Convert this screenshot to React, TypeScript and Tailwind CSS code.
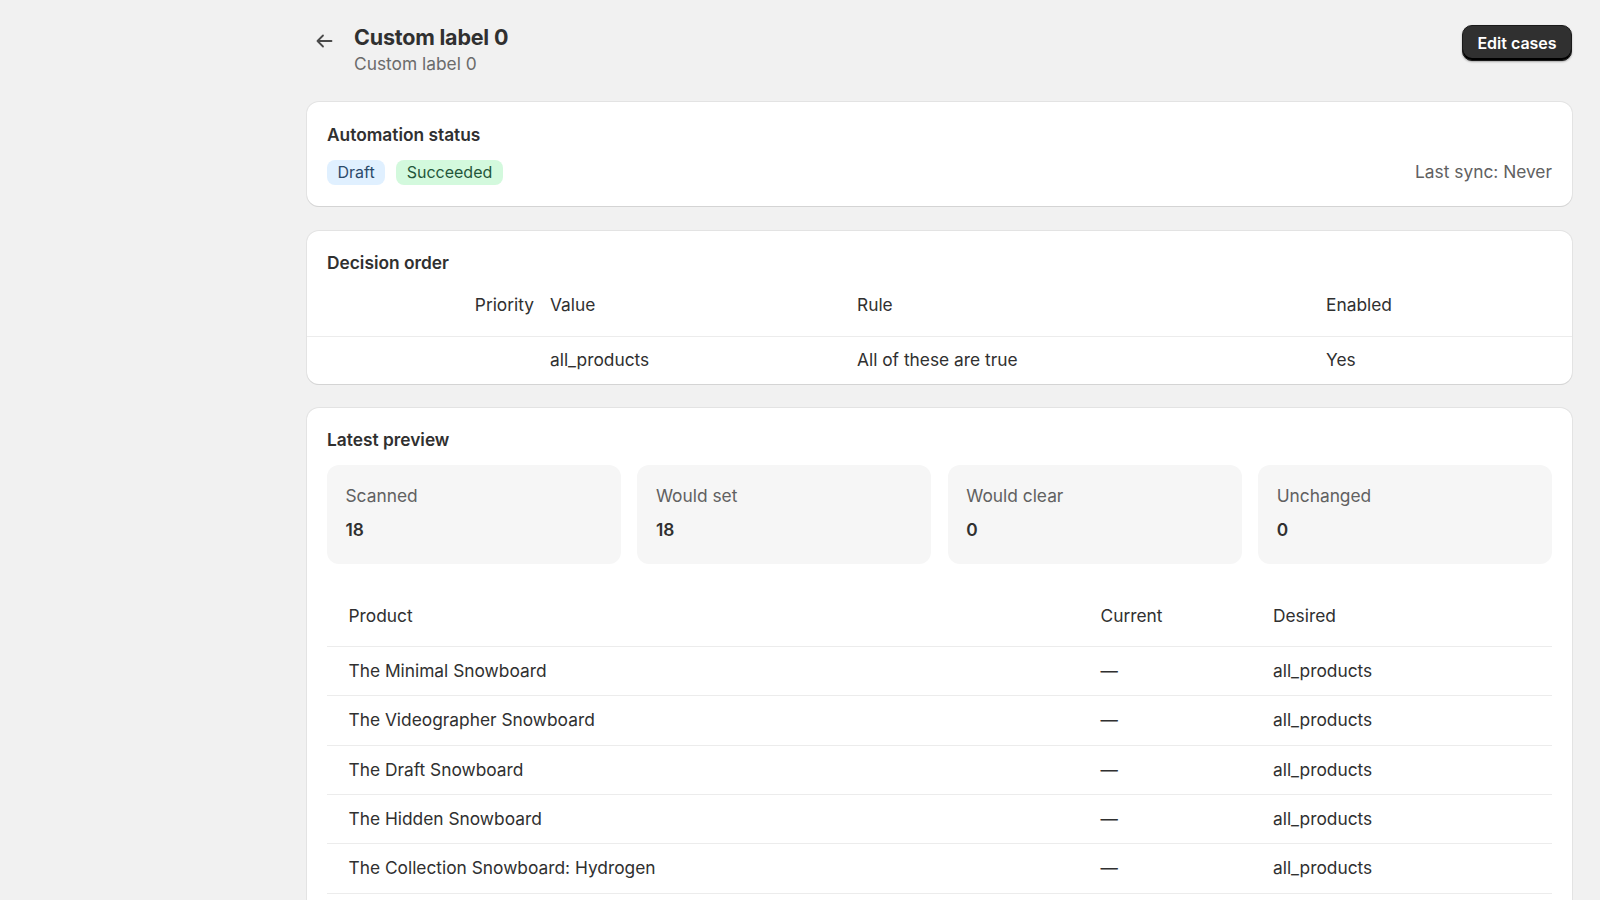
import React from "react";

const products = [
  "The Minimal Snowboard",
  "The Videographer Snowboard",
  "The Draft Snowboard",
  "The Hidden Snowboard",
  "The Collection Snowboard: Hydrogen",
];

const stats = [
  { label: "Scanned", value: "18" },
  { label: "Would set", value: "18" },
  { label: "Would clear", value: "0" },
  { label: "Unchanged", value: "0" },
];

export default function App() {
  return (
    <div
      className="min-h-screen w-full bg-[#f1f1f1] text-[#303030] text-[17.33px] leading-6"
      style={{ fontFamily: "Inter, 'Noto Sans', sans-serif" }}
    >
      <div className="pl-[307px] pr-[28px] pt-[23px]">
        {/* Header */}
        <div className="flex items-start justify-between">
          <div className="flex items-start">
            <button className="mt-[10px] ml-[7px] mr-[21px] flex h-[16px] w-[19px] items-center justify-center text-[#4a4a4a]">
              <svg width="18" height="14" viewBox="0 0 18 14" fill="none">
                <path
                  d="M8 1.5L2.5 7L8 12.5M2.5 7H16.5"
                  stroke="currentColor"
                  strokeWidth="1.8"
                  strokeLinecap="round"
                  strokeLinejoin="round"
                />
              </svg>
            </button>
            <div className="flex flex-col">
              <div className="text-[21.5px] font-bold leading-[28px] tracking-[-0.2px]">Custom label 0</div>
              <div className="mt-[1px] leading-[24px] text-[#6b6b6b]">Custom label 0</div>
            </div>
          </div>
          <button className="mt-[1.5px] h-[36px] w-[110px] rounded-[10px] border border-[#1a1a1a] bg-[#303030] text-[16px] font-semibold text-white shadow-[inset_0_-2px_0_#000,0_1px_2px_rgba(0,0,0,0.3)]">
            Edit cases
          </button>
        </div>

        {/* Automation status */}
        <div className="mt-[26px] rounded-[12px] bg-white px-[20px] pt-[20.7px] pb-[21px] shadow-[0_1px_0_#d4d4d4,0_0_0_1px_#e3e3e3]">
          <div className="font-semibold">Automation status</div>
          <div className="mt-[13.3px] flex items-center justify-between">
            <div className="flex gap-[11px]">
              <span className="rounded-[8px] bg-[#e0f0ff] px-[10.5px] text-[16px] leading-[25px] text-[#2c4a6b]">Draft</span>
              <span className="rounded-[8px] bg-[#d3f9dd] px-[10.5px] text-[16px] leading-[25px] text-[#24563a]">Succeeded</span>
            </div>
            <div className="text-[#616161]">Last sync: Never</div>
          </div>
        </div>

        {/* Decision order */}
        <div className="mt-[24.6px] rounded-[12px] bg-white pt-[20.4px] shadow-[0_1px_0_#d4d4d4,0_0_0_1px_#e3e3e3]">
          <div className="px-[20px] font-semibold">Decision order</div>
          <div className="grid grid-cols-[235px_307px_469px_1fr] border-b border-[#ececec]">
            <div className="py-[18.3px] pr-[8px] text-right">Priority</div>
            <div className="py-[18.3px] pl-[8px]">Value</div>
            <div className="py-[18.3px] pl-[8px]">Rule</div>
            <div className="py-[18.3px] pl-[8px]">Enabled</div>
          </div>
          <div className="grid grid-cols-[235px_307px_469px_1fr]">
            <div className="py-[11.5px] pr-[8px] text-right"></div>
            <div className="py-[11.5px] pl-[8px]">all_products</div>
            <div className="py-[11.5px] pl-[8px]">All of these are true</div>
            <div className="py-[11.5px] pl-[8px]">Yes</div>
          </div>
        </div>

        {/* Latest preview */}
        <div className="mt-[24.3px] rounded-[12px] bg-white px-[20px] pt-[20px] pb-[20px] shadow-[0_1px_0_#d4d4d4,0_0_0_1px_#e3e3e3]">
          <div className="font-semibold">Latest preview</div>
          <div className="mt-[13px] grid grid-cols-4 gap-[16.5px]">
            {stats.map((s) => (
              <div key={s.label} className="h-[99px] rounded-[12px] bg-[#f6f6f6] px-[18.5px] pt-[19px]">
                <div className="text-[#616161]">{s.label}</div>
                <div className="mt-[10.6px] font-semibold">{s.value}</div>
              </div>
            ))}
          </div>
          <div className="mt-[22px]">
            <div className="grid grid-cols-[752px_172.5px_1fr] border-b border-[#ececec]">
              <div className="px-[21.5px] py-[18px]">Product</div>
              <div className="px-[21.5px] py-[18px]">Current</div>
              <div className="px-[21.5px] py-[18px]">Desired</div>
            </div>
            {products.map((p) => (
              <div key={p} className="grid grid-cols-[752px_172.5px_1fr] border-b border-[#ececec]">
                <div className="px-[21.5px] py-[12px] leading-[24.4px]">{p}</div>
                <div className="px-[21.5px] py-[12px] leading-[24.4px]">—</div>
                <div className="px-[21.5px] py-[12px] leading-[24.4px]">all_products</div>
              </div>
            ))}
          </div>
        </div>
      </div>
    </div>
  );
}
